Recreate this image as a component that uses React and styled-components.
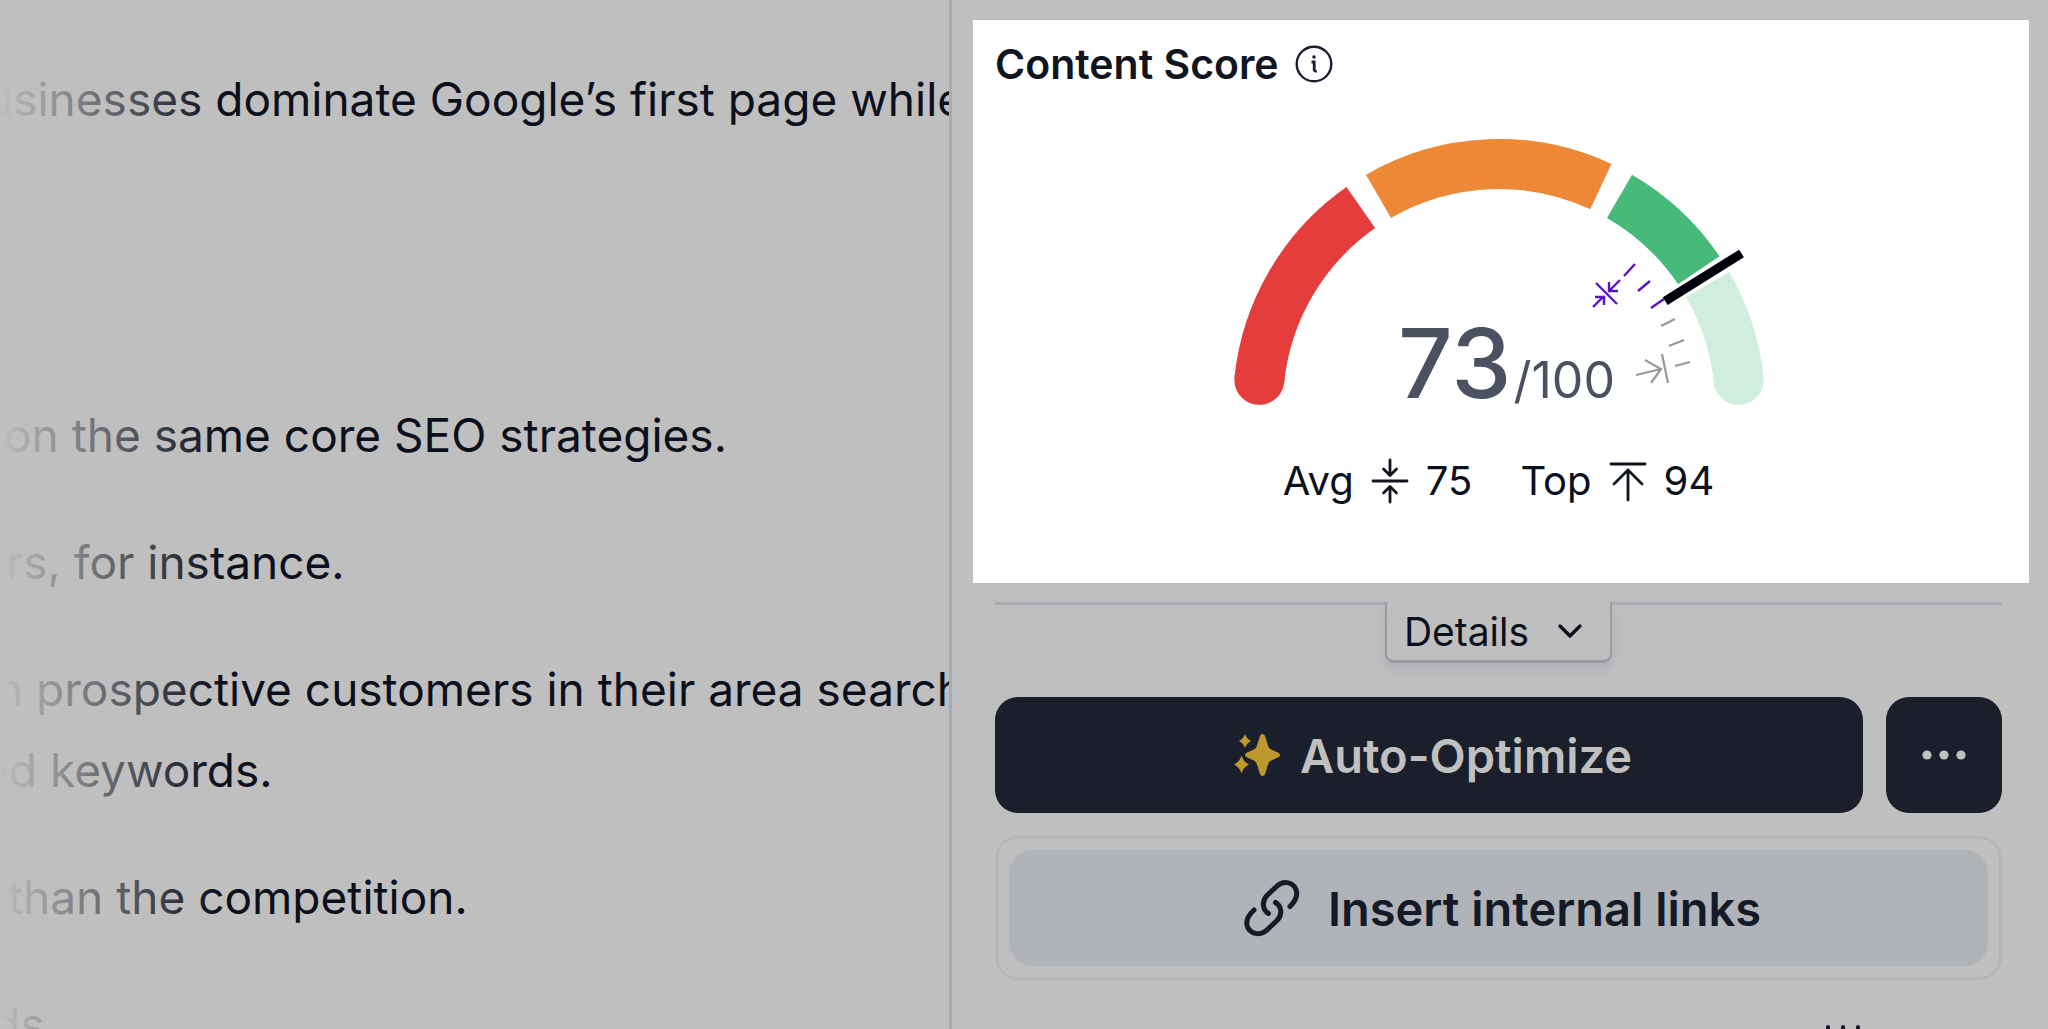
import styled, { createGlobalStyle } from 'styled-components';

const CENTER_X = 266;
const CENTER_Y = 266;
const RADIUS = 241;

// degrees run clockwise from the left end of the dial
const pointAt = (degrees, radius) => {
  const rad = (degrees * Math.PI) / 180;
  return [CENTER_X - radius * Math.cos(rad), CENTER_Y - radius * Math.sin(rad)];
};

const arcPath = (from, to) => {
  const [x1, y1] = pointAt(from, RADIUS);
  const [x2, y2] = pointAt(to, RADIUS);
  return `M${x1} ${y1}A${RADIUS} ${RADIUS} 0 0 1 ${x2} ${y2}`;
};

const segments = [
  { color: '#e53d3c', from: 6, to: 55, cap: 6 },
  { color: '#ed8936', from: 60, to: 115 },
  { color: '#47b978', from: 120, to: 146 },
  { color: '#d0eede', from: 150, to: 174, cap: 174 },
];

const Gauge = () => {
  const [needleX1, needleY1] = pointAt(148, 196);
  const [needleX2, needleY2] = pointAt(148, 286);

  return (
    <GaugeSvg viewBox="0 0 532 266" role="img" aria-label="Score 73 out of 100">
      {segments.map(({ color, from, to, cap }) => {
        const [capX, capY] = pointAt(cap || 0, RADIUS);
        return (
          <g key={color}>
            <path d={arcPath(from, to)} stroke={color} strokeWidth="50" />
            {cap && <circle cx={capX} cy={capY} r="25" fill={color} />}
          </g>
        );
      })}
      <g stroke="#5a14c4" strokeWidth="2.4">
        <path d="M391 137l11-12M405 152l12-10M418 169l13-9" />
        <path d="M363 144l21 21M387 141l-11 11M376 143v9h9M360 168l11-11M362 158h9v8" />
      </g>
      <g stroke="#96999e" strokeWidth="2.2">
        <path d="M428 187l14-7M436 207l15-6M442 227l15-4" />
        <path d="M429 215l6 29M403 236l25-6M412 221l16 9-10 14" />
      </g>
      <path d={`M${needleX1} ${needleY1}L${needleX2} ${needleY2}`} stroke="#00000a" strokeWidth="9" />
    </GaugeSvg>
  );
};

const InfoIcon = () => (
  <svg width="38" height="38" viewBox="0 0 38 38" fill="none" stroke="#1a2030" strokeWidth="2.4">
    <circle cx="19" cy="19" r="17.3" />
    <circle cx="19" cy="12" r="1.8" fill="#1a2030" stroke="none" />
    <path d="M16.5 17h2.7v7.5q0 2 2.6 1.5" strokeWidth="2.8" />
  </svg>
);

const AverageIcon = () => (
  <svg width="38" height="46" viewBox="0 0 38 46" fill="none" stroke="#10151f" strokeWidth="2.8" strokeLinecap="round" strokeLinejoin="round">
    <path d="M2 23h34M19 2v15M12.5 11l6.5 6.5 6.5-6.5M19 44V29M12.5 35l6.5-6.5 6.5 6.5" />
  </svg>
);

const TopIcon = () => (
  <svg width="38" height="46" viewBox="0 0 38 46" fill="none" stroke="#10151f" strokeWidth="2.8" strokeLinecap="round" strokeLinejoin="round">
    <path d="M2 6h34M19 42V12M5 26l14-14 14 14" />
  </svg>
);

const ChevronIcon = () => (
  <svg width="26" height="16" viewBox="0 0 26 16" fill="none" stroke="#0c101c" strokeWidth="3.4" strokeLinecap="round" strokeLinejoin="round">
    <path d="M3 3l10 10L23 3" />
  </svg>
);

const SparklesIcon = () => (
  <svg width="46" height="42" viewBox="0 0 46 42" fill="#bd992d">
    <path d="M28.5 0c1.500 0 2.200 1 2.700 2.500l3 9.500c.7 2 1.500 2.900 3.500 3.700l6.600 3.100c2.200 1 2.200 3.400 0 4.400l-6.600 3.100c-2 .8-2.800 1.700-3.500 3.700l-3 9.500c-.5 1.500-1.200 2.500-2.700 2.500s-2.200-1-2.700-2.500l-3-9.500c-.7-2-1.500-2.900-3.500-3.700l-6.600-3.100c-2.200-1-2.200-3.400 0-4.400l6.600-3.100c2-.8 2.800-1.700 3.500-3.700l3-9.500C26.300 1 27 0 28.500 0z" />
    <path d="M11 0c1.200 2.900 2.300 5 6 7-3.700 2-4.800 4.100-6 7-1.200-2.900-2.300-5-6-7 3.700-2 4.800-4.100 6-7z" />
    <path d="M7.5 21.500c1.500 4 2.800 6.500 7.500 9-4.700 2.500-6 5-7.500 9-1.500-4-2.800-6.500-7.500-9 4.700-2.500 6-5 7.500-9z" />
  </svg>
);

const LinkIcon = () => (
  <svg width="56" height="58" viewBox="0 0 56 58" fill="none" stroke="#141a27" strokeWidth="5" strokeLinecap="round">
    <path d="M24.500 34.500C18.500 31 17.500 22 23 16.500L32.500 7.500C38.500 1.500 48 2.500 51.500 9.500C54.500 15.500 52.500 21 46 27.500" />
    <path d="M31.500 23.500C38 27.500 38.500 36 33 41.500L23.500 50.500C17.500 56.500 8 56 4 49C1 43 3 37.500 10 31" />
  </svg>
);

const DotsIcon = () => (
  <svg width="46" height="12" viewBox="0 0 46 12" fill="#c0c0c0">
    <circle cx="6" cy="6" r="4.6" />
    <circle cx="23" cy="6" r="4.6" />
    <circle cx="40" cy="6" r="4.6" />
  </svg>
);

const App = () => {
  return (
    <>
      <GlobalStyle />
      <Page>
        <Editor>
          <Paragraph $space={255}>
            <Line $start={-14}>usinesses dominate Google’s first page while</Line>
          </Paragraph>
          <Paragraph>
            <Line $start={4}>on the same core SEO strategies.</Line>
          </Paragraph>
          <Paragraph>
            <Line $start={6}>rs, for instance.</Line>
          </Paragraph>
          <Paragraph>
            <Line $start={-4}>n prospective customers in their area search</Line>
            <Line $start={-18}>ed keywords.</Line>
          </Paragraph>
          <Paragraph>
            <Line $start={8}>than the competition.</Line>
          </Paragraph>
          <Paragraph>
            <Line $start={-8}>ds.</Line>
          </Paragraph>
        </Editor>
        <Sidebar>
          <ScoreCard>
            <Title>
              Content Score
              <InfoIcon />
            </Title>
            <Dial>
              <Gauge />
              <Score>
                <strong>73</strong>
                <span>/100</span>
              </Score>
            </Dial>
            <Stats>
              <Stat>
                Avg
                <AverageIcon />
                75
              </Stat>
              <Stat>
                Top
                <TopIcon />
                94
              </Stat>
            </Stats>
          </ScoreCard>
          <Actions>
            <DetailsRow>
              <DetailsButton type="button">
                Details
                <ChevronIcon />
              </DetailsButton>
            </DetailsRow>
            <ButtonRow>
              <OptimizeButton type="button">
                <SparklesIcon />
                Auto-Optimize
              </OptimizeButton>
              <MoreButton type="button" aria-label="More options">
                <DotsIcon />
              </MoreButton>
            </ButtonRow>
            <LinksFrame>
              <LinksButton type="button">
                <LinkIcon />
                Insert internal links
              </LinksButton>
            </LinksFrame>
            <Handle>
              <i />
              <i />
              <i />
            </Handle>
          </Actions>
        </Sidebar>
      </Page>
    </>
  );
};

const GlobalStyle = createGlobalStyle`
  * {
    box-sizing: border-box;
  }

  body {
    margin: 0;
    background: #bfbfbf;
    font-family: Inter, "Liberation Sans", sans-serif;
    color: #0c101c;
  }

  button {
    border: none;
    font-family: inherit;
    color: inherit;
    cursor: pointer;
  }

  svg {
    flex-shrink: 0;
  }
`;

const Page = styled.main`
  display: grid;
  grid-template-columns: 952fr 1096fr;
  height: 100vh;
  overflow: hidden;
`;

const Editor = styled.section`
  position: relative;
  min-width: 0;
  padding-top: 59px;
  overflow: hidden;
  border-right: 3px solid #a9abb0;
  font-size: 46px;
  line-height: 81px;

  &::after {
    content: '';
    position: absolute;
    inset: 0 auto 0 0;
    width: 220px;
    background: linear-gradient(to right, #bfbfbf, #bfbfbf00);
  }
`;

const Paragraph = styled.p`
  margin: 0 0 ${({ $space = 46 }) => $space}px;
`;

const Line = styled.span`
  display: block;
  margin-left: ${({ $start }) => $start}px;
  white-space: nowrap;
`;

const Sidebar = styled.aside`
  min-width: 0;
  padding: 20px 19px 0 21px;
`;

const ScoreCard = styled.section`
  height: 563px;
  padding: 20px 27px 20px 22px;
  background: #fff;
`;

const Title = styled.h2`
  display: flex;
  align-items: center;
  gap: 16px;
  margin: 0;
  font-size: 41px;
  font-weight: 600;
  line-height: 48px;
  color: #10151f;
`;

const Dial = styled.div`
  display: grid;
  justify-items: center;
  margin-top: 51px;

  > * {
    grid-area: 1 / 1;
  }
`;

const GaugeSvg = styled.svg`
  width: 532px;
  height: 266px;
  fill: none;
  overflow: visible;
`;

const Score = styled.div`
  align-self: end;
  display: flex;
  align-items: baseline;
  gap: 2px;
  padding-left: 16px;
  font-size: 50px;
  line-height: 50px;
  color: #4a5160;

  strong {
    font-size: 96px;
    font-weight: 500;
  }
`;

const Stats = styled.div`
  display: flex;
  justify-content: center;
  gap: 48px;
  margin-top: 52px;
`;

const Stat = styled.span`
  display: flex;
  align-items: center;
  gap: 17px;
  font-size: 40px;
  line-height: 48px;
`;

const Actions = styled.div`
  padding: 19px 27px 0 22px;
`;

const DetailsRow = styled.div`
  display: flex;
  justify-content: center;
  border-top: 3px solid #a9acb2;
`;

const DetailsButton = styled.button`
  display: flex;
  align-items: center;
  gap: 28px;
  height: 61px;
  margin-top: -3px;
  padding: 0 27px 0 17px;
  border: solid #999ca5;
  border-width: 0 2px 3px;
  border-radius: 0 0 9px 9px;
  background: #bfbfbf;
  box-shadow: 0 6px 12px #a0a5b399;
  font-size: 39px;
`;

const ButtonRow = styled.div`
  display: flex;
  gap: 23px;
  margin-top: 34px;
`;

const DarkButton = styled.button`
  display: flex;
  align-items: center;
  justify-content: center;
  height: 116px;
  border-radius: 23px;
  background: #1a1f2b;
  color: #c0c0c0;
`;

const OptimizeButton = styled(DarkButton)`
  flex: 1;
  gap: 20px;
  padding-left: 14px;
  font-size: 47px;
  font-weight: 600;
`;

const MoreButton = styled(DarkButton)`
  width: 116px;
`;

const LinksFrame = styled.div`
  margin-top: 23px;
  padding: 11px;
  border: 3px solid #b3b7bc;
  border-radius: 23px;
`;

const LinksButton = styled.button`
  display: flex;
  align-items: center;
  justify-content: center;
  gap: 28px;
  width: 100%;
  height: 116px;
  padding-left: 14px;
  border-radius: 23px;
  background: #b0b4b9;
  color: #141a27;
  font-size: 47px;
  font-weight: 600;
`;

const Handle = styled.div`
  display: flex;
  justify-content: flex-end;
  gap: 11px;
  margin-top: 45px;
  padding-right: 142px;

  i {
    width: 4px;
    height: 12px;
    border-radius: 2px;
    background: #141a27;
  }
`;

export default App;
